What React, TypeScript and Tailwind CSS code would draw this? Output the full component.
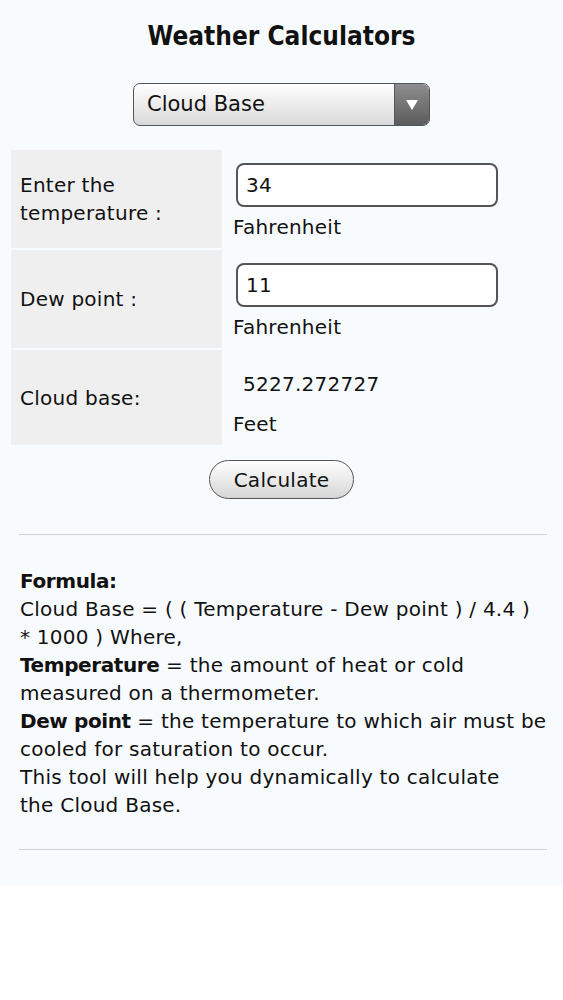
import { useState } from 'react'

const bodyFont = { fontFamily: '"DejaVu Sans", Verdana, sans-serif' }
const titleFont = { fontFamily: '"DejaVu Sans Condensed", "DejaVu Sans", sans-serif' }

export default function App() {
  const [temp, setTemp] = useState('34')
  const [dew, setDew] = useState('11')
  const [result, setResult] = useState('5227.272727')

  const calculate = () => {
    const t = parseFloat(temp)
    const d = parseFloat(dew)
    if (isNaN(t) || isNaN(d)) return
    setResult(String(parseFloat((((t - d) / 4.4) * 1000).toFixed(6))))
  }

  return (
    <div className="min-h-[1000px] bg-white text-[#111] tracking-[0.25px]" style={bodyFont}>
      <div className="bg-[#f8fbfd] pt-[20px] pb-[36px]">
        <h1 className="text-center text-[26px] font-bold leading-[32px] tracking-normal" style={titleFont}>
          Weather Calculators
        </h1>

        <div className="mt-[31px] flex justify-center">
          <div className="flex h-[43px] w-[297px] overflow-hidden rounded-[7px] border border-[#555] bg-gradient-to-b from-white to-[#d9d9d9]">
            <div className="flex flex-1 items-center pl-[13px] text-[21px] tracking-normal">Cloud Base</div>
            <div className="flex w-[35px] items-center justify-center border-l border-[#555] bg-gradient-to-b from-[#8e8e8e] to-[#5c5c5c]">
              <svg width="14" height="12" viewBox="0 0 14 12">
                <path d="M1 1 L13 1 L7 11 Z" fill="#fff" />
              </svg>
            </div>
          </div>
        </div>

        <div className="mt-[24px] ml-[11px] grid grid-cols-[211px_1fr] gap-y-[2px] text-[20px] leading-[24px]">
          <div className="flex h-[98px] items-center bg-[#efeff0] pl-[9px]">
            <span className="leading-[28px]">
              Enter the
              <br />
              temperature :
            </span>
          </div>
          <div className="flex flex-col pt-[13px] pl-[14px]">
            <input
              value={temp}
              onChange={(e) => setTemp(e.target.value)}
              className="h-[44px] w-[262px] rounded-[8px] border-2 border-[#555] bg-white px-[8px] text-[20px] outline-none"
            />
            <span className="mt-[8px] -ml-[3px]">Fahrenheit</span>
          </div>

          <div className="flex h-[98px] items-center bg-[#efeff0] pl-[9px]">Dew point :</div>
          <div className="flex flex-col pt-[13px] pl-[14px]">
            <input
              value={dew}
              onChange={(e) => setDew(e.target.value)}
              className="h-[44px] w-[262px] rounded-[8px] border-2 border-[#555] bg-white px-[8px] text-[20px] outline-none"
            />
            <span className="mt-[8px] -ml-[3px]">Fahrenheit</span>
          </div>

          <div className="flex h-[95px] items-center bg-[#efeff0] pl-[9px]">Cloud base:</div>
          <div className="flex flex-col pt-[22px] pl-[11px]">
            <span className="pl-[10px]">{result}</span>
            <span className="mt-[16px]">Feet</span>
          </div>
        </div>

        <div className="mt-[15px] flex justify-center">
          <button
            onClick={calculate}
            className="h-[39px] w-[145px] rounded-full border border-[#555] bg-gradient-to-b from-white to-[#d6d6d6] text-[20px]"
          >
            Calculate
          </button>
        </div>

        <hr className="ml-[19px] mr-[16px] mt-[35px] border-t border-[#cfd2d4]" />

        <div className="mt-[32px] ml-[20px] mr-[10px] text-[20px] leading-[28px]">
          <div className="font-bold tracking-[-0.4px]">Formula:</div>
          <div>
            Cloud Base = ( ( Temperature - Dew point ) / 4.4 )
            <br />* 1000 ) Where,
          </div>
          <div>
            <b className="tracking-[-0.4px]">Temperature</b> = the amount of heat or cold
            <br />
            measured on a thermometer.
          </div>
          <div>
            <b className="tracking-[-0.4px]">Dew point</b> = the temperature to which air must be
            <br />
            cooled for saturation to occur.
          </div>
          <div>
            This tool will help you dynamically to calculate
            <br />
            the Cloud Base.
          </div>
        </div>

        <hr className="ml-[19px] mr-[16px] mt-[30px] border-t border-[#cfd2d4]" />
      </div>
    </div>
  )
}
